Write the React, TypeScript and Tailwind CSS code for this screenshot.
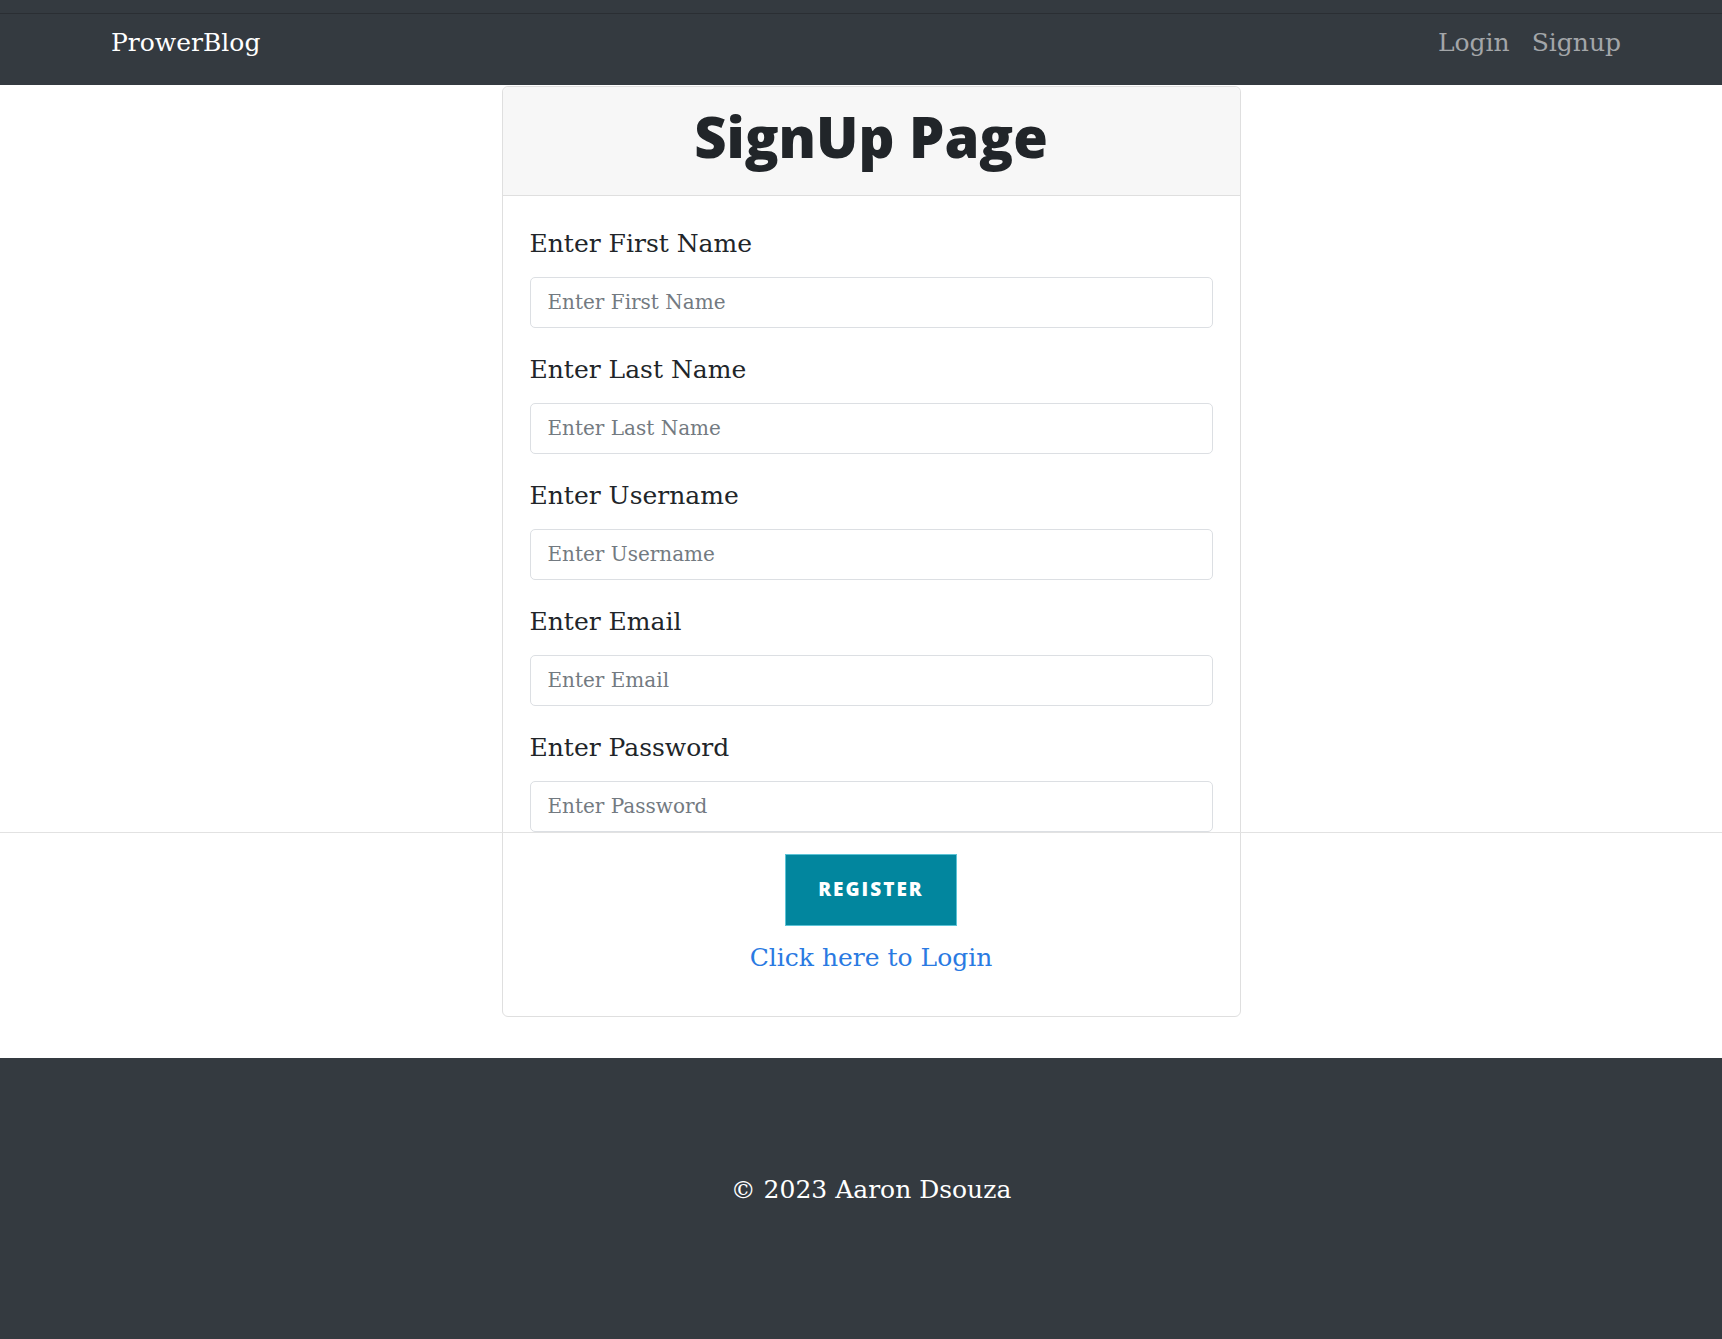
import React from 'react'

const serif = "font-['DejaVu_Serif',serif]"

const fields = [
  { label: 'Enter First Name', type: 'text' },
  { label: 'Enter Last Name', type: 'text' },
  { label: 'Enter Username', type: 'text' },
  { label: 'Enter Email', type: 'email' },
  { label: 'Enter Password', type: 'password' },
]

const Navbar = () => {
  return (
    <nav className="bg-[#343a40]">
      <div className="h-[13px]"></div>
      <div className="h-px bg-[#2a2e33]"></div>
      <div className="flex h-[71px] items-center justify-between pb-[13px] pl-[111px] pr-[101px]">
        <a href="/" className={`${serif} text-[25px] text-white`}>
          ProwerBlog
        </a>
        <ul className={`${serif} flex items-center gap-[22px] text-[25px] text-[#a3a6a9]`}>
          <li>
            <a href="/login">Login</a>
          </li>
          <li>
            <a href="/signup">Signup</a>
          </li>
        </ul>
      </div>
    </nav>
  )
}

const SignupCard = () => {
  return (
    <div className="flex justify-center pl-[20px]">
      <div className="mt-px w-[739px] rounded-[6px] border border-[#dfdfdf] bg-white">
        <div className="flex h-[109px] items-center justify-center rounded-t-[6px] border-b border-[#dfdfdf] bg-[#f7f7f7] pb-[10px]">
          <h1 className="font-['Open_Sans',sans-serif] text-[56px] font-extrabold leading-none text-[#212529]">
            SignUp Page
          </h1>
        </div>
        <form className="px-[27px] pt-[29px] pb-[40px]" onSubmit={(e) => e.preventDefault()}>
          {fields.map((f, i) => (
            <div key={f.label} className={i === 0 ? '' : 'mt-[23.5px]'}>
              <label className={`${serif} block text-[25px] leading-[37.5px] text-[#212529]`}>
                {f.label}
              </label>
              <input
                type={f.type}
                placeholder={f.label}
                className={`${serif} mt-[14px] block h-[51px] w-full rounded-[5px] border border-[#dcdfe3] px-[17px] text-[20px] text-[#212529] placeholder:text-[#737a81] focus:outline-none`}
              />
            </div>
          ))}
          <div className="mt-[22px] flex flex-col items-center">
            <button
              type="submit"
              className="h-[72px] w-[172px] border border-[#5cc3d6] bg-[#02869e] font-['Open_Sans',sans-serif] text-[19px] font-extrabold uppercase tracking-[2px] text-white"
            >
              Register
            </button>
            <a href="/login" className={`${serif} mt-[13px] text-[25px] leading-[37.5px] text-[#2a7ae2]`}>
              Click here to Login
            </a>
          </div>
        </form>
      </div>
    </div>
  )
}

const Footer = () => {
  return (
    <footer className="mt-[41px] h-[282px] bg-[#343a40] pt-[113px] pl-[20px] text-center">
      <p className={`${serif} text-[25px] leading-[37.5px] text-white`}>© 2023 Aaron Dsouza</p>
    </footer>
  )
}

export default function App() {
  return (
    <div className="relative min-h-screen bg-white">
      <Navbar />
      <SignupCard />
      <Footer />
      {/* stray full-width rule from the page, sits over the card */}
      <div className="pointer-events-none absolute left-0 right-0 top-[832px] h-px bg-[#e2e2e2]"></div>
    </div>
  )
}
